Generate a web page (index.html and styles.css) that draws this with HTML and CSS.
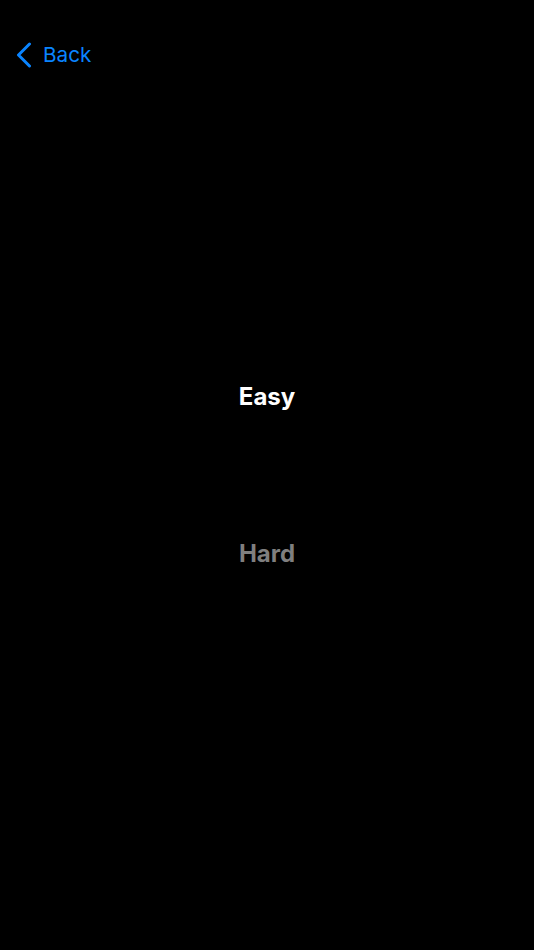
FILE: index.html
```html
<!DOCTYPE html>
<html lang="en">
<head>
<meta charset="utf-8">
<title>Difficulty</title>
<link rel="stylesheet" href="styles.css">
</head>
<body>
<div class="screen">
  <header class="nav">
    <button class="back" type="button">
      <svg class="chev" width="16" height="26" viewBox="0 0 16 26" aria-hidden="true">
        <path d="M13.5 2 L2.5 13 L13.5 24" fill="none" stroke="#0a84ff" stroke-width="3" stroke-linecap="round" stroke-linejoin="round"/>
      </svg>
      <span class="back-label">Back</span>
    </button>
  </header>
  <main class="options">
    <div class="option selected">Easy</div>
    <div class="option">Hard</div>
  </main>
  <div class="spacer"></div>
</div>
</body>
</html>
```
FILE: styles.css
```css
html, body {
  margin: 0;
  padding: 0;
  background: #000;
}
body {
  font-family: Inter, "Noto Sans", "Liberation Sans", sans-serif;
  color: #fff;
}
.screen {
  height: 950px;
  display: grid;
  grid-template-rows: 100px 1fr 100px;
}
.nav {
  display: flex;
  align-items: flex-start;
  padding: 41px 0 0 16px;
}
.back {
  display: flex;
  align-items: center;
  gap: 11px;
  background: none;
  border: 0;
  padding: 0;
  color: #0a84ff;
  font-family: inherit;
  font-size: 20.7px;
  line-height: 28px;
  cursor: pointer;
}
.chev {
  display: block;
}
.options {
  display: flex;
  flex-direction: column;
  align-items: center;
  justify-content: center;
  gap: 125px;
}
.option {
  height: 32px;
  line-height: 32px;
  font-size: 24px;
  font-weight: 700;
  color: #7f7f7f;
}
.option.selected {
  color: #fff;
}
```
